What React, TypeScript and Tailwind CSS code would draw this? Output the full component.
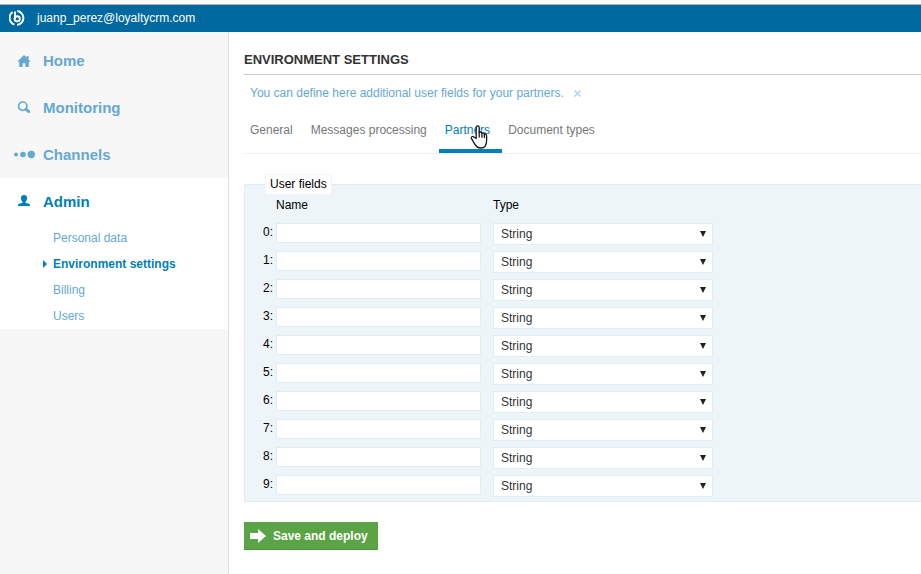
import type { ReactNode } from "react";

const navItems: { label: string; icon: ReactNode }[] = [
  {
    label: "Home",
    icon: (
      <svg width="22" height="14" viewBox="0 0 22 14" fill="currentColor" aria-hidden="true">
        <path d="M11 1 L5 7 V8 H6.2 V13 H9.6 V9.2 H12.4 V13 H15.8 V8 H17 V7 L15.6 5.6 V2 H13.6 V3.6 Z" />
      </svg>
    ),
  },
  {
    label: "Monitoring",
    icon: (
      <svg width="22" height="14" viewBox="0 0 22 14" fill="none" stroke="currentColor" aria-hidden="true">
        <circle cx="9.7" cy="5.2" r="4.2" strokeWidth="1.7" />
        <path d="M12.8 8.2 L15.8 10.6" strokeWidth="2.8" strokeLinecap="round" />
      </svg>
    ),
  },
  {
    label: "Channels",
    icon: (
      <svg width="22" height="14" viewBox="0 0 22 14" fill="currentColor" aria-hidden="true">
        <circle cx="3" cy="6.5" r="2" />
        <circle cx="10" cy="6.5" r="2.8" />
        <circle cx="18.3" cy="6.5" r="3.7" />
      </svg>
    ),
  },
];

const adminLinks = ["Personal data", "Environment settings", "Billing", "Users"];
const tabs = ["General", "Messages processing", "Partners", "Document types"];
const rows = Array.from({ length: 10 }, (_, i) => i);

function Logo() {
  return (
    <svg width="16" height="16" viewBox="0 0 16 16" fill="none" stroke="#fff" aria-hidden="true">
      <path d="M3.6 2 A7.2 7.2 0 0 0 5.4 14.6" strokeWidth="1.9" />
      <path d="M8.2 1 A7.05 7.05 0 0 1 8.2 15" strokeWidth="2" />
      <path d="M6 1.4 V9" strokeWidth="1.9" />
      <circle cx="8.2" cy="8.8" r="2.6" strokeWidth="1.9" />
    </svg>
  );
}

function HandCursor() {
  return (
    <svg
      className="pointer-events-none absolute top-[14px] left-[31px]"
      width="18"
      height="24"
      viewBox="0 0 18 24"
      aria-hidden="true"
    >
      <path
        d="M6.2 13.5 V2.4 C6.2 0.4 9.2 0.4 9.2 2.4 V7.4 C9.9 6.7 11.6 6.9 11.9 8.2 C12.8 7.6 14.1 7.9 14.4 9.2 C15.5 8.7 16.6 9.4 16.6 10.9 V15.5 C16.6 20 14.6 23 10.8 23 C6.9 23 5.6 20.8 4.3 18.4 L1.4 13.4 C0.8 11.9 2.6 10.8 3.9 12 Z"
        fill="#fff"
        stroke="#15151f"
        strokeWidth="1.3"
        strokeLinejoin="round"
      />
      <path d="M9.2 7.4 V12 M11.9 8.2 V12.2 M14.4 9.2 V12.6" stroke="#15151f" strokeWidth="1.3" strokeLinecap="round" />
    </svg>
  );
}

export default function App() {
  return (
    <div className="flex min-h-screen flex-col bg-white pt-1 font-['Liberation_Sans',Arial,sans-serif] text-xs text-black">
      <header className="flex h-7 items-center gap-3 border-t border-[#b0b0b0] bg-[#00699f] pb-[2px] pl-[9px] text-white">
        <Logo />
        <span>juanp_perez@loyaltycrm.com</span>
      </header>

      <div className="flex flex-1">
        <nav className="w-[229px] shrink-0 border-r border-[#dedede] bg-[#f7f7f7] pt-[5px]">
          {navItems.map((item) => (
            <a
              key={item.label}
              href="#"
              className="flex h-[47px] items-center gap-2 pl-[13px] text-[15px] font-bold text-[#65a8d2]"
            >
              {item.icon}
              {item.label}
            </a>
          ))}
          <div className="bg-white">
            <a href="#" className="flex h-[47px] items-center gap-2 pl-[13px] text-[15px] font-bold text-[#0080ba]">
              <svg width="22" height="14" viewBox="0 0 22 14" fill="currentColor" aria-hidden="true">
                <path d="M11 0 C13 0 14 1.2 14 3.2 C14 5 13.2 6.2 12.5 6.8 V7.8 L16 8.8 C16.8 9.1 17 9.6 17 11 H5 C5 9.6 5.2 9.1 6 8.8 L9.5 7.8 V6.8 C8.8 6.2 8 5 8 3.2 C8 1.2 9 0 11 0 Z" />
              </svg>
              Admin
            </a>
            <ul>
              {adminLinks.map((label) => {
                const active = label === "Environment settings";
                return (
                  <li key={label} className="flex h-[26px] items-center pl-[43px]">
                    <span className="w-[10px]">
                      {active && (
                        <svg width="4" height="8" viewBox="0 0 4 8" fill="#0080ba" aria-hidden="true">
                          <path d="M0 0 L4 4 L0 8 Z" />
                        </svg>
                      )}
                    </span>
                    <a href="#" className={active ? "font-bold text-[#0080ba]" : "text-[#65a8d2]"}>
                      {label}
                    </a>
                  </li>
                );
              })}
            </ul>
          </div>
        </nav>

        <main className="min-w-0 flex-1 pl-[15px]">
          <h1 className="flex h-[43px] items-end border-b border-[#c5d0cd] pb-1 text-[13px] leading-5 font-bold text-[#333]">
            ENVIRONMENT SETTINGS
          </h1>
          <div className="flex h-9 items-center gap-2 pl-[6px] text-[#65a8d2]">
            <p>You can define here additional user fields for your partners.</p>
            <button type="button" aria-label="Close" className="text-[#b5d5ea]">
              <svg width="10" height="10" viewBox="0 0 10 10" stroke="currentColor" strokeWidth="1.6" aria-hidden="true">
                <path d="M2.5 2.5 L8.5 8.5 M8.5 2.5 L2.5 8.5" />
              </svg>
            </button>
          </div>
          <div className="flex h-[43px] items-stretch border-b border-[#efefef] text-[#777]">
            {tabs.map((tab) => {
              const active = tab === "Partners";
              return (
                <a
                  key={tab}
                  href="#"
                  className={
                    active
                      ? "relative border-b-4 border-[#0080ba] pt-[11px] pr-3 pl-[6px] text-[#0080ba]"
                      : "pt-[11px] pr-3 pl-[6px]"
                  }
                >
                  {tab}
                  {active && <HandCursor />}
                </a>
              );
            })}
          </div>

          <form onSubmit={(e) => e.preventDefault()}>
            <fieldset className="mt-5 border border-r-0 border-[#dfedf5] bg-[#edf5f9] pb-[2px]">
              <legend className="ml-5 h-5 border border-b-0 border-[#edf5f9] bg-white px-1 leading-[18px]">
                User fields
              </legend>
              <table className="w-[468px] table-fixed border-collapse">
                <colgroup>
                  <col className="w-[31px]" />
                  <col className="w-[217px]" />
                  <col className="w-[220px]" />
                </colgroup>
                <thead>
                  <tr className="h-[25px] text-left align-top">
                    <td />
                    <th className="pt-[3px] font-normal" scope="col">Name</th>
                    <th className="pt-[3px] font-normal" scope="col">Type</th>
                  </tr>
                </thead>
                <tbody>
                  {rows.map((i) => (
                    <tr key={i} className="h-7 align-top">
                      <td className="pt-[5px] pr-[3px] text-right">
                        <label htmlFor={`name-${i}`}>{i}:</label>
                      </td>
                      <td className="pt-1">
                        <input
                          id={`name-${i}`}
                          type="text"
                          className="block h-5 w-[205px] border border-[#dfedf5] bg-white px-1"
                        />
                      </td>
                      <td className="pt-1">
                        <div className="relative">
                          <select
                            aria-label={`Type ${i}`}
                            className="block h-[22px] w-full appearance-none border border-[#dfedf5] bg-white pl-[7px] text-[#333]"
                          >
                            <option>String</option>
                          </select>
                          <svg
                            className="pointer-events-none absolute top-2 right-[7px]"
                            width="6"
                            height="6"
                            viewBox="0 0 6 6"
                            fill="#222"
                            aria-hidden="true"
                          >
                            <path d="M0 0 H6 L3 6 Z" />
                          </svg>
                        </div>
                      </td>
                    </tr>
                  ))}
                </tbody>
              </table>
            </fieldset>

            <button
              type="submit"
              className="mt-5 flex h-7 items-center gap-[7px] border-b border-[#4f963b] bg-[#5ba446] pr-[10px] pl-[6px] font-bold text-white"
            >
              <svg width="16" height="14" viewBox="0 0 16 14" fill="currentColor" aria-hidden="true">
                <path d="M0 4 H8 V0 L16 7 L8 14 V10 H0 Z" />
              </svg>
              Save and deploy
            </button>
          </form>
        </main>
      </div>
    </div>
  );
}
